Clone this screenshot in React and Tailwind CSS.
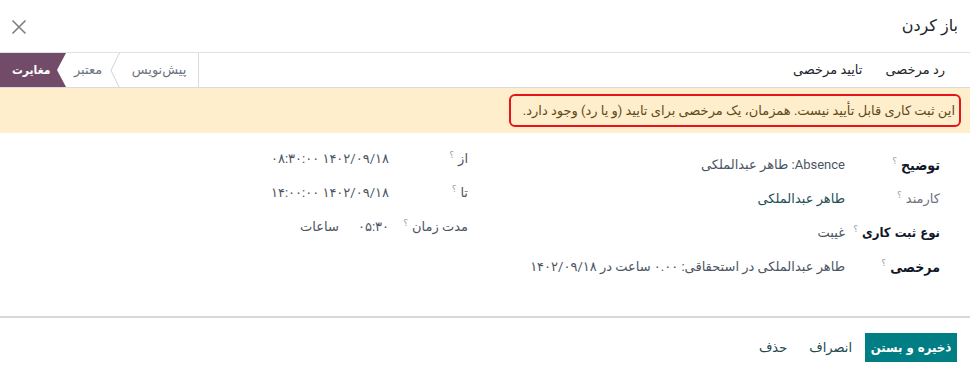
import React from "react";

const Q = () => (
  <span className="text-[9px] text-[#9aa0a6] align-super mr-[4px] font-normal">؟</span>
);

const COND = { fontFamily: '"DejaVu Sans Condensed", "DejaVu Sans", sans-serif' };

function Field({ label, labelClass, value, valueClass, labelW, bold }) {
  return (
    <div className="flex items-center h-[34px]">
      <div className={`shrink-0 whitespace-nowrap ${labelW} ${labelClass}`}>
        <span style={bold ? COND : undefined}>{label}</span>
        <Q />
      </div>
      <div className={valueClass}>{value}</div>
    </div>
  );
}

export default function App() {
  return (
    <div
      dir="rtl"
      className="w-[970px] h-[372px] bg-white overflow-hidden text-[13px] text-[#374151]"
      style={{ fontFamily: 'Roboto, "DejaVu Sans", sans-serif' }}
    >
      {/* header */}
      <div className="h-[53px] flex items-center justify-between pr-[12px] pl-[11px] border-b border-[#dee2e6]">
        <div className="text-[16px] text-[#212529]">باز کردن</div>
        <svg width="16" height="16" viewBox="0 0 16 16" className="mt-[2px]">
          <path d="M1.5 1.5 L14.5 14.5 M14.5 1.5 L1.5 14.5" stroke="#7b7f84" strokeWidth="1.6" fill="none" />
        </svg>
      </div>

      {/* status row */}
      <div className="h-[35px] flex items-stretch justify-between border-b border-[#d8dadd]">
        <div className="flex items-center gap-[23px] pr-[25px]">
          <span className="text-[#212529]">رد مرخصی</span>
          <span className="text-[#212529]">تایید مرخصی</span>
        </div>
        <div className="flex items-stretch border-r border-[#d8dadd]">
          <div className="w-[78px] flex items-center justify-center text-[#6b7280]">پیش‌نویس</div>
          <svg width="10" height="35" viewBox="0 0 10 35" className="shrink-0">
            <path d="M9.5 0 L1 17.5 L9.5 35" stroke="#d0d4d8" strokeWidth="1" fill="none" />
          </svg>
          <div className="w-[44px] flex items-center justify-center text-[#6b7280]">معتبر</div>
          <div className="w-[66px] bg-[#714b67] text-white font-bold flex items-center justify-start pl-[12px] [clip-path:polygon(0_0,100%_0,calc(100%_-_9px)_50%,100%_100%,0_100%)]">
            <span className="text-[12px] mr-auto" style={COND}>مغایرت</span>
          </div>
        </div>
      </div>

      {/* warning */}
      <div className="h-[45px] bg-[#ffeecc] flex items-center pr-[9px]">
        <div className="h-[33px] flex items-center border-2 border-[#e5141a] rounded-[6px] pr-[4px] pl-[12px] text-[#5e4a1b]">
          این ثبت کاری قابل تأیید نیست. همزمان، یک مرخصی برای تایید (و یا رد) وجود دارد.
        </div>
      </div>

      {/* form */}
      <div className="h-[183px] grid grid-cols-2 gap-x-[19px] pr-[30px] pl-[15px] pt-[9px]">
        <div className="mt-[6px]">
          <Field
            bold
            labelW="w-[95px]"
            label="توضیح"
            labelClass="font-bold text-[#111827] text-[14px]"
            value="Absence: طاهر عبدالملکی"
            valueClass="text-[#4b5563]"
          />
          <Field
            labelW="w-[95px]"
            label="کارمند"
            labelClass="text-[#6b7280]"
            value="طاهر عبدالملکی"
            valueClass="text-[#1f4f55]"
          />
          <Field
            bold
            labelW="w-[95px]"
            label="نوع ثبت کاری"
            labelClass="font-bold text-[#111827] text-[13px]"
            value="غیبت"
            valueClass="text-[#4b5563]"
          />
          <Field
            bold
            labelW="w-[95px]"
            label="مرخصی"
            labelClass="font-bold text-[#111827] text-[14px]"
            value="طاهر عبدالملکی در استحقاقی: ۰.۰۰ ساعت در ۱۴۰۲/۰۹/۱۸"
            valueClass="text-[#4b5563]"
          />
        </div>
        <div>
          <Field
            labelW="w-[79px]"
            label="از"
            labelClass="text-[#4b5563]"
            value="۱۴۰۲/۰۹/۱۸ ۰۸:۳۰:۰۰"
            valueClass="text-[#4b5563]"
          />
          <Field
            labelW="w-[79px]"
            label="تا"
            labelClass="text-[#4b5563]"
            value="۱۴۰۲/۰۹/۱۸ ۱۴:۰۰:۰۰"
            valueClass="text-[#4b5563]"
          />
          <div className="flex items-center h-[34px]">
            <div className="shrink-0 w-[79px] text-[#4b5563]">
              مدت زمان
              <Q />
            </div>
            <div className="text-[#4b5563]">۰۵:۳۰</div>
            <div className="text-[#4b5563] mr-[19px]">ساعات</div>
          </div>
        </div>
      </div>

      {/* footer */}
      <div className="border-t-2 border-[#d8d9dc] flex items-start pt-[15px] pr-[13px] gap-[2px]">
        <div className="h-[29px] w-[92px] justify-center bg-[#017e84] text-white font-bold flex items-center text-[13px]" style={COND}>ذخیره و بستن</div>
        <div className="h-[29px] px-[11px] text-[#24464c] flex items-center">انصراف</div>
        <div className="h-[29px] px-[9px] text-[#24464c] flex items-center">حذف</div>
      </div>
    </div>
  );
}
